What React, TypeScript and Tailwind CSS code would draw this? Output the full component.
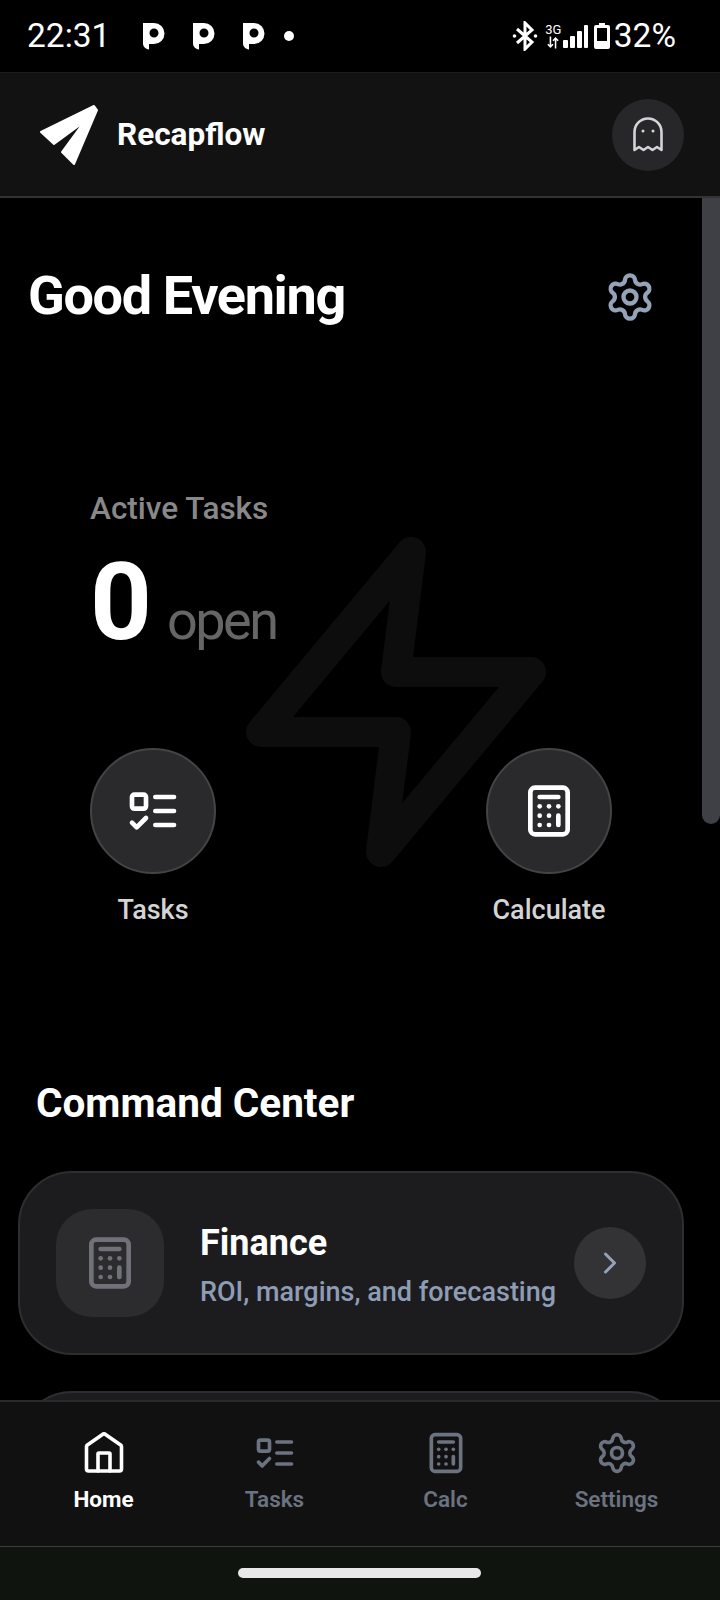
import { Calculator, ChevronRight, Settings } from "lucide-react";

function ListTodo({ size, className }: { size: number; className?: string }) {
  return (
    <svg width={size} height={size} viewBox="0 0 24 24" fill="none" stroke="currentColor" strokeWidth={2} strokeLinecap="round" strokeLinejoin="round" className={className}>
      <rect x="3" y="5" width="6" height="6" rx="1" />
      <path d="m3 17 2 2 4-4" />
      <path d="M13 6h8" />
      <path d="M13 12h8" />
      <path d="M13 18h8" />
    </svg>
  );
}

function HomeIcon() {
  return (
    <svg width="44" height="44" viewBox="0 0 44 44" fill="none" stroke="currentColor" strokeWidth="3.600" strokeLinecap="round" strokeLinejoin="round">
      <path d="M4.500 15.500a2 2 0 0 1 .5-1.300L20.500 3.500a2 2 0 0 1 3 0L39 14.200a2 2 0 0 1 .5 1.300V38a2 2 0 0 1-2 2H6.500a2 2 0 0 1-2-2Z" />
      <path d="M16 40V23a1 1 0 0 1 1-1h10a1 1 0 0 1 1 1v17" />
    </svg>
  );
}

function PMark() {
  return (
    <svg width="22" height="28" viewBox="0 0 22 28" className="text-white">
      <path fill="currentColor" fillRule="evenodd" d="M0 1h11a10.500 10.500 0 0 1 0 21H6v5.500C2.500 27 0 24.500 0 21.500ZM11 6.500a4.500 4.500 0 1 0 0 9 4.500 4.500 0 0 0 0-9Z" />
    </svg>
  );
}

function StatusBar() {
  return (
    <div className="flex h-[72px] shrink-0 items-center bg-black pl-[27px] pr-[44px] text-white">
      <span className="w-[116px] text-[33.5px] leading-none">22:31</span>
      <div className="flex items-center gap-[28px]">
        <PMark />
        <PMark />
        <PMark />
      </div>
      <div className="ml-[19px] size-[10px] rounded-full bg-white" />
      <div className="ml-auto flex items-center">
        <svg width="26" height="30" viewBox="0 0 26 30" fill="none" stroke="white" strokeWidth="3" className="mr-[7px]">
          <path d="M5 8l15 13-7 7V2l7 7L5 22" />
          <circle cx="2.500" cy="15" r="1.800" fill="white" stroke="none" />
          <circle cx="23.500" cy="15" r="1.800" fill="white" stroke="none" />
        </svg>
        <div className="flex w-[17px] flex-col items-center">
          <span className="text-[13px] leading-[12px]">3G</span>
          <svg width="12" height="13" viewBox="0 0 14 14" stroke="white" strokeWidth="1.800" fill="none">
            <path d="M4 0v12M1 9l3 3 3-3M10 14V2M7 5l3-3 3 3" />
          </svg>
        </div>
        <svg width="26" height="24" viewBox="0 0 26 24" fill="white" className="ml-[1px] mt-[2px]">
          <rect x="0" y="15" width="5" height="8" rx="1" />
          <rect x="7" y="11" width="5" height="12" rx="1" />
          <rect x="14" y="6" width="5" height="17" rx="1" />
          <rect x="21" y="0" width="4" height="23" rx="1" />
        </svg>
        <svg width="16" height="26" viewBox="0 0 16 26" className="ml-[5px]">
          <path fill="white" fillRule="evenodd" d="M5 0h6v2h3a2 2 0 0 1 2 2v20a2 2 0 0 1-2 2H2a2 2 0 0 1-2-2V4a2 2 0 0 1 2-2h3ZM3 5v13h10V5Z" />
        </svg>
        <span className="ml-[4px] text-[33.5px] leading-none">32%</span>
      </div>
    </div>
  );
}

function Header() {
  return (
    <div className="flex h-[126px] shrink-0 items-center border-b-2 border-t border-b-[#333336] border-t-[#1c1c1c] bg-[#121212] pl-[39px] pr-[36px]">
      <svg width="60" height="62" viewBox="0 0 60 62" className="shrink-0">
        <path fill="white" stroke="white" strokeWidth="2" strokeLinejoin="round" d="M55 2 2 28 15 40 45 18 23 48 35 60 58 6Z" />
      </svg>
      <span className="ml-[18px] text-[31.5px] font-bold leading-none text-white">Recapflow</span>
      <div className="ml-auto flex size-[72px] items-center justify-center rounded-full bg-[#27272a]">
        <svg width="32" height="38" viewBox="0 0 32 38" fill="none" stroke="#d4d4d8" strokeWidth="2.600" strokeLinejoin="round">
          <path d="M2.500 34V16a13.500 13.500 0 0 1 27 0v18l-4.500-3-4.500 3-4.500-3-4.500 3-4.500-3Z" />
          <circle cx="11" cy="15" r="1.500" fill="#d4d4d8" stroke="none" />
          <circle cx="21" cy="15" r="1.500" fill="#d4d4d8" stroke="none" />
        </svg>
      </div>
    </div>
  );
}

function Action({ label, children }: { label: string; children: React.ReactNode }) {
  return (
    <div className="flex w-[126px] flex-col items-center">
      <div className="flex size-[126px] items-center justify-center rounded-full border-2 border-[#444446] bg-[#2a2a2c] text-white">
        {children}
      </div>
      <span className="mt-[16px] whitespace-nowrap text-[27px] font-medium leading-[40px] text-[#d4d4d4]">{label}</span>
    </div>
  );
}

function NavItem({ label, active, children }: { label: string; active?: boolean; children: React.ReactNode }) {
  return (
    <div className={`flex flex-col items-center ${active ? "text-white" : "text-[#6b7280]"}`}>
      {children}
      <span className={`mt-[10px] text-[22.5px] leading-[28px] ${active ? "font-bold" : "font-semibold"}`}>{label}</span>
    </div>
  );
}

export default function App() {
  return (
    <div className="relative flex h-[1600px] w-[720px] flex-col overflow-hidden bg-black font-['Roboto',sans-serif]">
      <StatusBar />
      <Header />
      <main className="relative min-h-0 flex-1 overflow-hidden">
        <div className="absolute right-0 top-0 h-[626px] w-[18px] rounded-b-[9px] bg-[#3f3f46]" />
        <div className="flex items-center justify-between pl-[28px] pr-[64px] pt-[68px]">
          <h1 className="-mt-[1px] mb-[1px] text-[54px] font-bold leading-[62px] tracking-[-1.35px] text-white">Good Evening</h1>
          <Settings size={52} strokeWidth={2} className="text-[#94a3b8]" />
        </div>
        <section className="relative mx-[90px] mt-[161px] h-[526px]">
          <svg width="360" height="360" viewBox="0 0 24 24" fill="none" stroke="#0d0d0d" strokeWidth="2" strokeLinecap="round" strokeLinejoin="round" className="absolute left-[126px] top-[33px]">
            <polygon points="13 2 3 14 12 14 11 22 21 10 12 10 13 2" />
          </svg>
          <div className="relative">
            <p className="text-[31.5px] font-medium leading-[40px] text-[#888888]">Active Tasks</p>
            <div className="mt-[18px] flex items-baseline">
              <span className="text-[108px] font-bold leading-[110px] text-white">0</span>
              <span className="ml-[15px] text-[54px] leading-none tracking-[-2.5px] text-[#666666]">open</span>
            </div>
            <div className="mt-[91px] flex justify-between pr-[18px]">
              <Action label="Tasks"><ListTodo size={56} /></Action>
              <Action label="Calculate"><Calculator size={56} strokeWidth={2} /></Action>
            </div>
          </div>
        </section>
        <h2 className="ml-[36px] mt-[64px] text-[40.5px] font-bold leading-[48px] text-white">Command Center</h2>
        <div className="ml-[18px] mr-[36px] mt-[44px] flex h-[184px] items-center rounded-[54px] border-2 border-[#2e2e30] bg-[#1c1c1e] pl-[36px] pr-[36px]">
          <div className="flex h-[108px] w-[108px] shrink-0 items-center justify-center rounded-[36px] bg-[#2c2c2e] text-[#71717a]">
            <Calculator size={56} strokeWidth={2} />
          </div>
          <div className="ml-[36px] min-w-0 flex-1 pt-[4px]">
            <p className="text-[36px] font-bold leading-[44px] text-white">Finance</p>
            <p className="mt-[9px] whitespace-nowrap text-[27px] font-medium leading-[36px] text-[#8e9db5]">ROI, margins, and forecasting</p>
          </div>
          <div className="flex size-[72px] shrink-0 items-center justify-center rounded-full bg-[#333336] text-[#94a3b8]">
            <ChevronRight size={36} strokeWidth={2} />
          </div>
        </div>
        <div className="ml-[18px] mr-[36px] mt-[36px] h-[184px] rounded-[54px] border-2 border-[#2e2e30] bg-[#1c1c1e]" />
      </main>
      <nav className="relative grid h-[146px] shrink-0 grid-cols-4 border-t-2 border-[#2a2a2c] bg-[#111111] px-[18px] pt-[29px]">
        <NavItem label="Home" active><HomeIcon /></NavItem>
        <NavItem label="Tasks"><ListTodo size={44} /></NavItem>
        <NavItem label="Calc"><Calculator size={44} strokeWidth={2} /></NavItem>
        <NavItem label="Settings"><Settings size={44} strokeWidth={2} /></NavItem>
      </nav>
      <div className="flex h-[54px] shrink-0 items-start justify-center border-t border-[#3a3f3a] bg-[#0f140f] pr-[2px] pt-[21px]">
        <div className="h-[10px] w-[243px] rounded-full bg-[#e8e8e8]" />
      </div>
    </div>
  );
}
